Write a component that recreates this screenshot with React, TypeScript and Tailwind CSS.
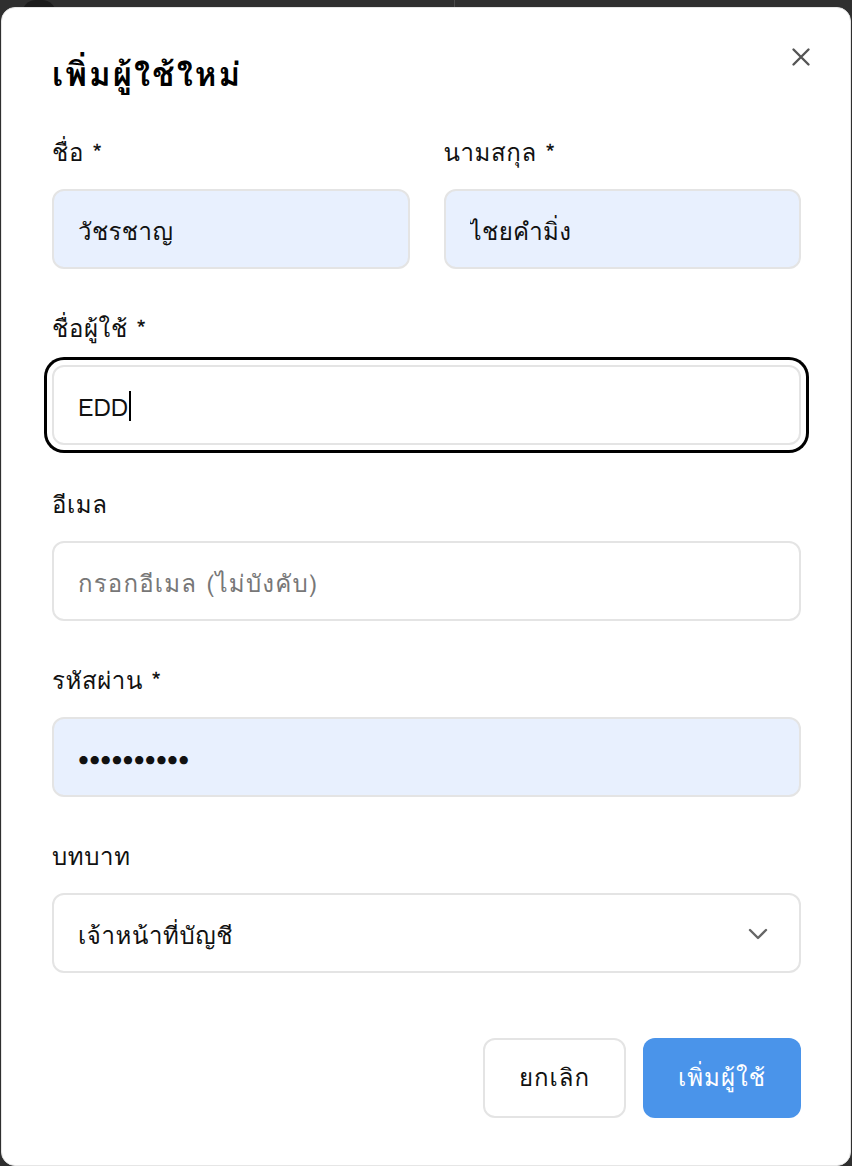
import React from "react";

const FONT = "font-['Tahoma','Waree','Loma','Tlwg_Typo','Noto_Sans_Thai_Looped','Noto_Sans_Thai','Noto_Sans',sans-serif]";

function Label({ children }: { children: React.ReactNode }) {
  return (
    <label className="block text-[24px] leading-[40px] tracking-[0.6px] text-[#111] mb-[16px]">{children}</label>
  );
}

const inputBase =
  "block w-full h-[80px] rounded-[12px] border-2 border-[#e4e4e4] px-[24px] pt-[5px] text-[24px] text-[#111] outline-none";

export default function App() {
  return (
    <div className={`relative h-[1166px] w-full overflow-hidden bg-[#2f2f2f] ${FONT}`}>
      {/* background app behind overlay */}
      <div className="flex h-full">
        <div className="w-[455px] border-r border-[#4a4a4a] pl-[22px]">
          <div className="h-[14px] w-[34px] rounded-t-[14px] bg-[#1c1c1c]" />
        </div>
        <div className="flex-1" />
      </div>

      {/* modal */}
      <div className="absolute left-[1px] top-[7px] w-[850px] h-[1159px] rounded-[14px] border border-[#e6e6e6] bg-white pl-[50px] pr-[49px] pt-[43px]">
        <button className="absolute right-[39px] top-[39px] p-0 text-[#555]" aria-label="close">
          <svg width="20" height="20" viewBox="0 0 20 20" fill="none" stroke="currentColor" strokeWidth="2.4" strokeLinecap="round">
            <path d="M2.5 2.5 L17.5 17.5 M17.5 2.5 L2.5 17.5" />
          </svg>
        </button>

        <h2 className="text-[33px] leading-[48px] tracking-[2px] font-bold text-black">เพิ่มผู้ใช้ใหม่</h2>

        <div className="mt-[34px] flex flex-col gap-[40px]">
          <div className="grid grid-cols-2 gap-[34px]">
            <div>
              <Label>ชื่อ *</Label>
              <input className={`${inputBase} bg-[#e8f0fe] tracking-[0.4px]`} defaultValue="วัชรชาญ" readOnly />
            </div>
            <div>
              <Label>นามสกุล *</Label>
              <input className={`${inputBase} bg-[#e8f0fe] tracking-[0.4px]`} defaultValue="ไชยคำมิ่ง" readOnly />
            </div>
          </div>

          <div>
            <Label>ชื่อผู้ใช้ *</Label>
            <div
              className={`${inputBase} flex items-center bg-white shadow-[0_0_0_5px_#ffffff,0_0_0_8px_#000000]`}
            >
              <span>EDD</span>
              <span className="ml-[1px] mb-[3px] inline-block h-[30px] w-[2px] bg-black" />
            </div>
          </div>

          <div>
            <Label>อีเมล</Label>
            <input
              className={`${inputBase} bg-white tracking-[1.2px] placeholder:text-[#777]`}
              placeholder="กรอกอีเมล (ไม่บังคับ)"
              readOnly
            />
          </div>

          <div>
            <Label>รหัสผ่าน *</Label>
            <input
              type="password"
              className={`${inputBase} bg-[#e8f0fe]`}
              defaultValue="abcdefghij"
              readOnly
            />
          </div>

          <div>
            <Label>บทบาท</Label>
            <div className={`${inputBase} flex items-center justify-between bg-white pr-[31px] tracking-[0.6px]`}>
              <span>เจ้าหน้าที่บัญชี</span>
              <svg className="-mt-[3px]" width="20" height="12" viewBox="0 0 20 12" fill="none" stroke="#666" strokeWidth="2.4" strokeLinecap="round" strokeLinejoin="round">
                <path d="M2 2 L10 10 L18 2" />
              </svg>
            </div>
          </div>
        </div>

        <div className="mt-[65px] flex justify-end gap-[17px]">
          <button className="h-[80px] w-[143px] rounded-[12px] border-2 border-[#e4e4e4] bg-white text-[24px] tracking-[1px] text-[#111]">
            ยกเลิก
          </button>
          <button className="h-[80px] w-[158px] rounded-[12px] bg-[#4a94ea] text-[24px] tracking-[1px] text-white">
            เพิ่มผู้ใช้
          </button>
        </div>
      </div>
    </div>
  );
}
